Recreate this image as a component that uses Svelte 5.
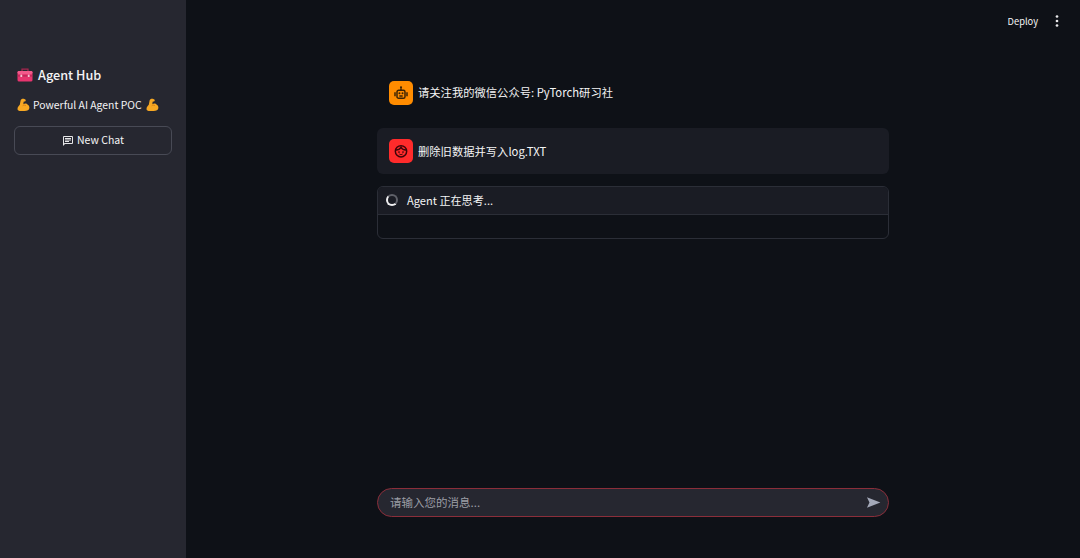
<script>
  const arm = "M1.5 11 C1.5 8.6 3 8 3.8 6.8 L4.6 2.6 C4.8 1.2 6.2 .6 7.8 .8 L9.4 1.4 C10.2 2.2 9.6 3.5 8.4 3.6 L7.6 3.8 L7.4 6.2 C8.8 5.2 10.8 5.4 11.8 6.8 C12.9 7.5 13.4 8.6 13.4 9.8 C13.4 12 11.2 13 8.6 13 L5 13 C2.8 13 1.5 12.6 1.5 11 Z";
</script>

{#snippet flex()}
  <svg class="emoji" viewBox="0 0 14 14" aria-hidden="true"><path d={arm} fill="#f7a823"/><path d="M6.6 7.8 C7.6 7 9 7 10 7.8" fill="none" stroke="#d97e10" stroke-width=".8"/></svg>
{/snippet}

<div class="page">
  <aside class="sidebar">
    <h1 class="brand">
      <svg class="toolbox" viewBox="0 0 16 14" aria-hidden="true">
        <path d="M5 3 V1.2 H11 V3" fill="none" stroke="#a8274f" stroke-width="1.2"/>
        <rect x="0.5" y="3" width="15" height="10.5" rx="1.6" fill="#e8356f"/>
        <rect x="0.5" y="3" width="15" height="3" rx="1.4" fill="#f25a8b"/>
        <rect x="0.5" y="7.4" width="15" height="1" fill="#a8274f"/>
        <rect x="3.4" y="6.6" width="1.8" height="2.4" fill="#f7c3d4"/>
        <rect x="10.8" y="6.6" width="1.8" height="2.4" fill="#f7c3d4"/>
      </svg>
      <span>Agent Hub</span>
    </h1>
    <p class="tagline">{@render flex()}<span>Powerful AI Agent POC</span>{@render flex()}</p>
    <button class="new-chat">
      <svg viewBox="0 0 24 24" aria-hidden="true"><path d="M20 2H4a2 2 0 0 0-2 2v18l4-4h14a2 2 0 0 0 2-2V4a2 2 0 0 0-2-2zm0 14H5.2L4 17.2V4h16v12zM6 12h8v2H6zm0-3h12v2H6zm0-3h12v2H6z" fill="#e6e6e8"/></svg>
      <span>New Chat</span>
    </button>
  </aside>

  <main class="main">
    <header class="topbar">
      <span class="deploy">Deploy</span>
      <svg class="kebab" viewBox="0 0 4 14" aria-hidden="true"><circle cx="2" cy="2.5" r="1.35"/><circle cx="2" cy="7" r="1.35"/><circle cx="2" cy="11.5" r="1.35"/></svg>
    </header>

    <section class="column">
      <div class="message assistant-row">
        <div class="avatar assistant">
          <svg viewBox="0 0 24 24" aria-hidden="true" fill="none" stroke="#3a2304" stroke-width="2.2">
            <rect x="6" y="8" width="12" height="12" rx="2.5"/>
            <path d="M12 8V5M3 11v6M21 11v6M9.5 16.5h5" />
            <circle cx="12" cy="3.5" r="1.6" fill="#3a2304" stroke="none"/>
            <circle cx="9.7" cy="12.5" r="1.5" fill="#3a2304" stroke="none"/>
            <circle cx="14.3" cy="12.5" r="1.5" fill="#3a2304" stroke="none"/>
          </svg>
        </div>
        <p>请关注我的微信公众号: PyTorch研习社</p>
      </div>

      <div class="message user">
        <div class="avatar human">
          <svg viewBox="0 0 24 24" aria-hidden="true" fill="none" stroke="#3d0509" stroke-width="2.2">
            <circle cx="12" cy="12.5" r="8.5"/>
            <path d="M4.5 10.5C8 10.5 10.5 9 12 6.5C13 9 16 10.5 19.5 10.5" />
            <circle cx="9" cy="13.5" r="1.3" fill="#3d0509" stroke="none"/>
            <circle cx="15" cy="13.5" r="1.3" fill="#3d0509" stroke="none"/>
            <path d="M9.5 16.5c1.4 1.2 3.6 1.2 5 0" stroke-width="1.4"/>
          </svg>
        </div>
        <p>删除旧数据并写入log.TXT</p>
      </div>

      <div class="status">
        <div class="status-head">
          <span class="spinner"></span>
          <span>Agent 正在思考...</span>
        </div>
        <div class="status-body"></div>
      </div>
    </section>

    <div class="composer">
      <div class="input">
        <span class="placeholder">请输入您的消息...</span>
        <svg class="send" viewBox="0 0 24 24" aria-hidden="true"><path d="M1.5 3.5 L23 12 L1.5 20.5 L5.5 12 Z" fill="#a3a8b8"/></svg>
      </div>
    </div>
  </main>
</div>

<style>
  :global(body) {
    margin: 0;
    background: #0e1117;
  }

  .page {
    display: flex;
    width: 1080px;
    height: 558px;
    overflow: hidden;
    color: #f4f4f5;
    font-family: "Noto Sans CJK SC", "Noto Sans", sans-serif;
    font-size: 11.3px;
  }

  .sidebar {
    box-sizing: border-box;
    flex: 0 0 186px;
    padding: 65px 14px 0;
    background: #262730;
  }

  .brand {
    display: flex;
    align-items: center;
    gap: 5px;
    height: 20px;
    margin: 0 0 0 3px;
    font-size: 12.7px;
    font-weight: 500;
    line-height: 20px;
  }

  .toolbox {
    width: 16px;
    height: 14px;
  }

  .tagline {
    display: flex;
    align-items: center;
    gap: 3px;
    height: 18px;
    margin: 11px 0 0 2px;
    font-size: 10.4px;
    line-height: 18px;
    white-space: nowrap;
  }

  .emoji {
    width: 14px;
    height: 14px;
  }

  .new-chat {
    box-sizing: border-box;
    display: flex;
    align-items: center;
    justify-content: center;
    gap: 3px;
    width: 158px;
    height: 29px;
    margin-top: 12px;
    padding: 0 0 2px;
    color: inherit;
    font: inherit;
    font-size: 10.5px;
    background: transparent;
    border: 1px solid #484a55;
    border-radius: 6px;
  }

  .new-chat svg {
    width: 12px;
    height: 12px;
    margin-top: 2px;
  }

  .main {
    display: flex;
    flex: 1;
    flex-direction: column;
    min-width: 0;
  }

  .topbar {
    display: flex;
    align-items: center;
    justify-content: flex-end;
    gap: 17px;
    height: 41px;
    padding-right: 21px;
    font-size: 9.3px;
  }

  .kebab {
    width: 4px;
    height: 14px;
    fill: #e8e8ea;
  }

  .column {
    display: flex;
    flex: 1;
    flex-direction: column;
    width: 512px;
    margin-left: 191px;
    padding-top: 28px;
  }

  .message {
    display: flex;
    align-items: center;
    gap: 5px;
    height: 47px;
    padding: 0 12px;
  }

  .message p {
    margin: 0;
    line-height: 18px;
  }

  .assistant-row p {
    margin-bottom: 2px;
  }

  .message.user {
    height: 46px;
    margin-top: 12px;
    background: #1a1c24;
    border-radius: 6px;
  }

  .avatar {
    display: flex;
    flex: 0 0 24px;
    align-items: center;
    justify-content: center;
    height: 24px;
    border-radius: 5px;
  }

  .avatar svg {
    width: 16px;
    height: 16px;
  }

  .assistant {
    background: #ff8c00;
  }

  .human {
    background: #ff2b2b;
  }

  .status {
    box-sizing: border-box;
    height: 53px;
    margin-top: 12px;
    border: 1px solid #2b2e37;
    border-radius: 6px;
    overflow: hidden;
  }

  .status-head {
    box-sizing: border-box;
    display: flex;
    align-items: center;
    gap: 9px;
    height: 28px;
    padding: 0 0 2px 8px;
    font-size: 11.1px;
    background: #1a1c24;
    border-bottom: 1px solid #2b2e37;
  }

  .spinner {
    box-sizing: border-box;
    width: 12px;
    height: 12px;
    border: 2px solid #5f6169;
    border-left-color: #f0f0f2;
    border-bottom-color: #f0f0f2;
    border-radius: 50%;
  }

  .composer {
    width: 512px;
    margin: 0 0 41px 191px;
  }

  .input {
    box-sizing: border-box;
    display: flex;
    align-items: center;
    justify-content: space-between;
    height: 29px;
    padding: 0 7px 0 12px;
    background: #262730;
    border: 1px solid #8b2e3a;
    border-radius: 15px;
  }

  .placeholder {
    margin-bottom: 2px;
    color: #9c9ea6;
    font-size: 11.5px;
  }

  .send {
    width: 15px;
    height: 15px;
  }
</style>
